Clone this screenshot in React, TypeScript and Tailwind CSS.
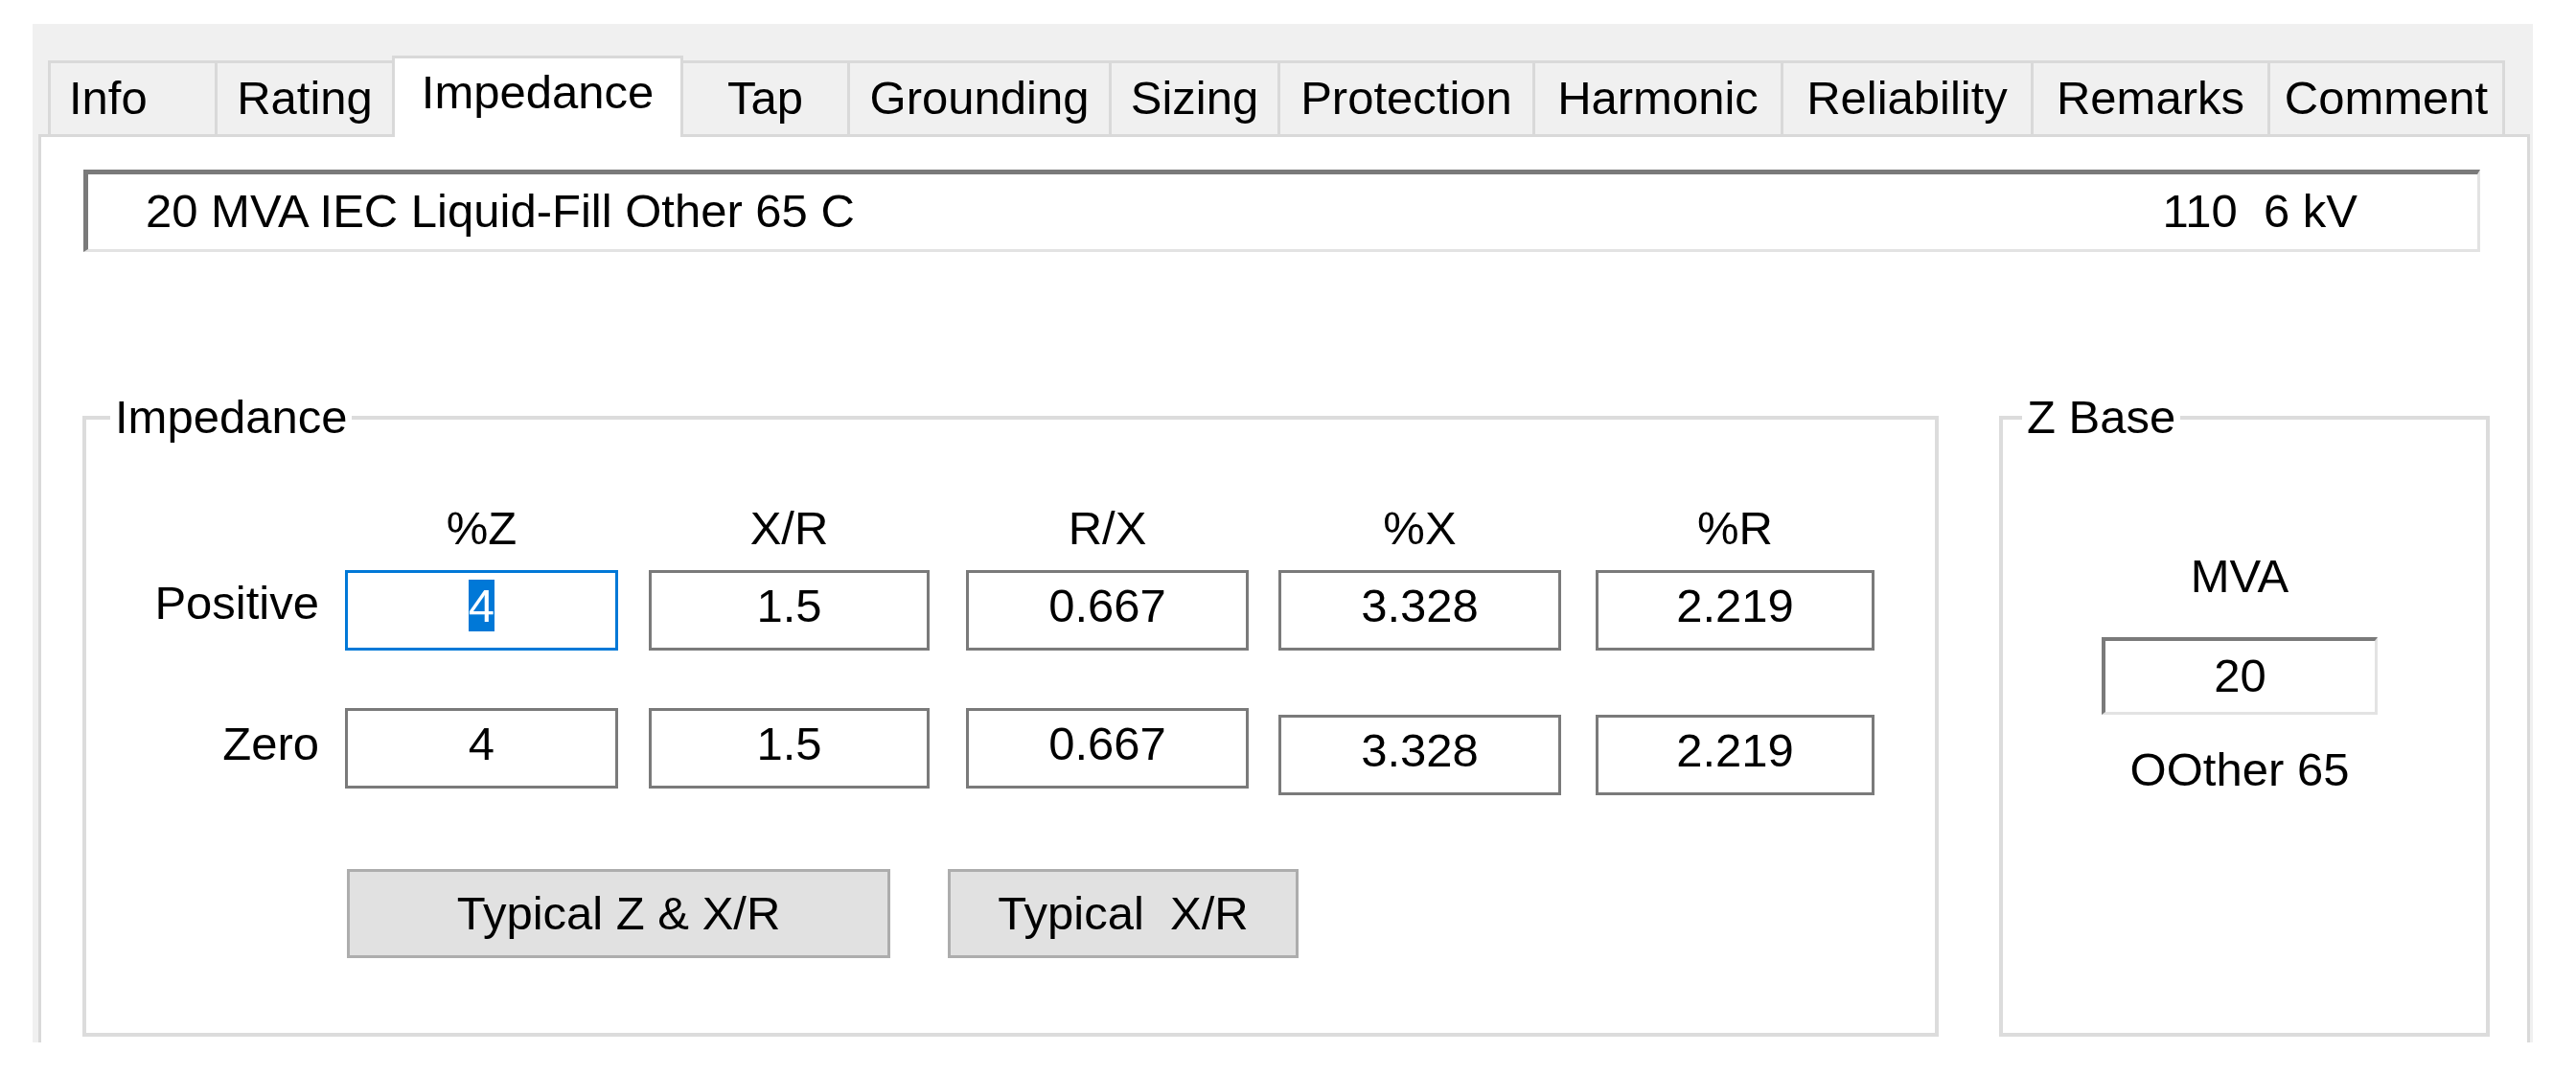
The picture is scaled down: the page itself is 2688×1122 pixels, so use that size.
const tabs = [
  { name: "Info", w: "w-[174px]" },
  { name: "Rating", w: "w-[185px]" },
  { name: "Impedance", w: "w-[304px]" },
  { name: "Tap", w: "w-[171px]" },
  { name: "Grounding", w: "w-[273px]" },
  { name: "Sizing", w: "w-[176px]" },
  { name: "Protection", w: "w-[266px]" },
  { name: "Harmonic", w: "w-[259px]" },
  { name: "Reliability", w: "w-[261px]" },
  { name: "Remarks", w: "w-[247px]" },
  { name: "Comment", w: "w-[248px]" },
];

const activeTab = "Impedance";

// column widths / left margins measured off the dialog
const cols = [
  { head: "%Z", w: "w-[285px]", ml: "ml-[27px]", pos: "4", zero: "4", drop: "" },
  { head: "X/R", w: "w-[293px]", ml: "ml-[32px]", pos: "1.5", zero: "1.5", drop: "" },
  { head: "R/X", w: "w-[295px]", ml: "ml-[38px]", pos: "0.667", zero: "0.667", drop: "" },
  { head: "%X", w: "w-[295px]", ml: "ml-[31px]", pos: "3.328", zero: "3.328", drop: "mt-[7px]" },
  { head: "%R", w: "w-[291px]", ml: "ml-[36px]", pos: "2.219", zero: "2.219", drop: "mt-[7px]" },
];

function Tab({ name, w, index }: { name: string; w: string; index: number }) {
  const active = name === activeTab;
  const afterActive = index > 0 && tabs[index - 1].name === activeTab;
  const last = index === tabs.length - 1;

  if (active) {
    return (
      <div className={`${w} h-[85px] -mb-[3px] relative z-10 flex items-center justify-center pb-[10px] bg-white border-t-[3px] border-x-[3px] border-[#d9d9d9]`}>
        {name}
      </div>
    );
  }

  return (
    <div
      className={`${w} h-[77px] flex items-center bg-[#f0f0f0] border-t-[3px] border-[#d9d9d9] ${afterActive ? "border-l-0" : "border-l-[3px]"} ${last ? "border-r-[3px]" : ""} ${index === 0 ? "justify-start pl-[19px]" : "justify-center"}`}
    >
      {name}
    </div>
  );
}

function ValueBox({ value, w, ml, extra, selected }: { value: string; w: string; ml: string; extra: string; selected?: boolean }) {
  return (
    <div
      className={`${w} ${ml} ${extra} h-[84px] pt-[5px] leading-[59px] text-center bg-white border-[3px] ${selected ? "border-[#0078d7]" : "border-[#7a7a7a]"}`}
    >
      {selected ? <span className="bg-[#0078d7] text-white">{value}</span> : value}
    </div>
  );
}

export default function App() {
  return (
    <div className="w-[2688px] h-[1122px] bg-white pt-[25px] pl-[34px] font-['Liberation_Sans',Arial,sans-serif] text-[49px] text-black">
      <div className="w-[2609px] h-[1063px] bg-[#f0f0f0] flex flex-col">
        <div className="h-[33px] shrink-0" />

        {/* tab strip */}
        <div className="h-[82px] shrink-0 flex items-end pl-[16px]">
          {tabs.map((t, i) => (
            <Tab key={t.name} name={t.name} w={t.w} index={i} />
          ))}
        </div>

        {/* page */}
        <div className="ml-[6px] w-[2600px] flex-1 bg-white border-x-[3px] border-t-[3px] border-[#d9d9d9]">
          <div className="ml-[44px] mt-[34px] w-[2501px] h-[86px] flex items-center justify-between pl-[60px] pr-[125px] border-t-[5px] border-l-[5px] border-r-[3px] border-b-[3px] border-t-[#7a7a7a] border-l-[#7a7a7a] border-r-[#e3e3e3] border-b-[#e3e3e3] whitespace-pre">
            <span>20 MVA IEC Liquid-Fill Other 65 C</span>
            <span>110  6 kV</span>
          </div>

          <div className="flex ml-[43px] mt-[148px]">
            <fieldset className="w-[1937px] h-[671px] border-[4px] border-[#dcdcdc]">
              <legend className="ml-[25px] px-[5px] leading-[49px]">Impedance</legend>

              <div className="flex mt-[63px] leading-[56px]">
                <div className="w-[243px]" />
                {cols.map((c) => (
                  <div key={c.head} className={`${c.w} ${c.ml} text-center`}>
                    {c.head}
                  </div>
                ))}
              </div>

              <div className="flex items-start mt-[16px]">
                <div className="w-[243px] text-right pt-[5px] leading-[59px]">Positive</div>
                {cols.map((c, i) => (
                  <ValueBox key={c.head} value={c.pos} w={c.w} ml={c.ml} extra="" selected={i === 0} />
                ))}
              </div>

              <div className="flex items-start mt-[60px]">
                <div className="w-[243px] text-right pt-[8px] leading-[59px]">Zero</div>
                {cols.map((c) => (
                  <ValueBox key={c.head} value={c.zero} w={c.w} ml={c.ml} extra={c.drop} />
                ))}
              </div>

              <div className="flex mt-[77px]">
                <button className="ml-[272px] w-[567px] h-[93px] bg-[#e1e1e1] border-[3px] border-[#adadad]">
                  Typical Z &amp; X/R
                </button>
                <button className="ml-[60px] w-[366px] h-[93px] bg-[#e1e1e1] border-[3px] border-[#adadad] whitespace-pre">
                  Typical  X/R
                </button>
              </div>
            </fieldset>

            <fieldset className="ml-[63px] w-[512px] h-[671px] border-[4px] border-[#dcdcdc]">
              <legend className="ml-[20px] px-[5px] leading-[49px]">Z Base</legend>
              <div className="flex flex-col items-center pr-[10px]">
                <div className="mt-[113px] leading-[56px]">MVA</div>
                <div className="mt-[36px] w-[288px] h-[81px] flex items-center justify-center border-t-[4px] border-l-[4px] border-r-[3px] border-b-[3px] border-t-[#7a7a7a] border-l-[#7a7a7a] border-r-[#e3e3e3] border-b-[#e3e3e3]">
                  20
                </div>
                <div className="mt-[29px] leading-[56px]">OOther 65</div>
              </div>
            </fieldset>
          </div>
        </div>
      </div>
    </div>
  );
}
